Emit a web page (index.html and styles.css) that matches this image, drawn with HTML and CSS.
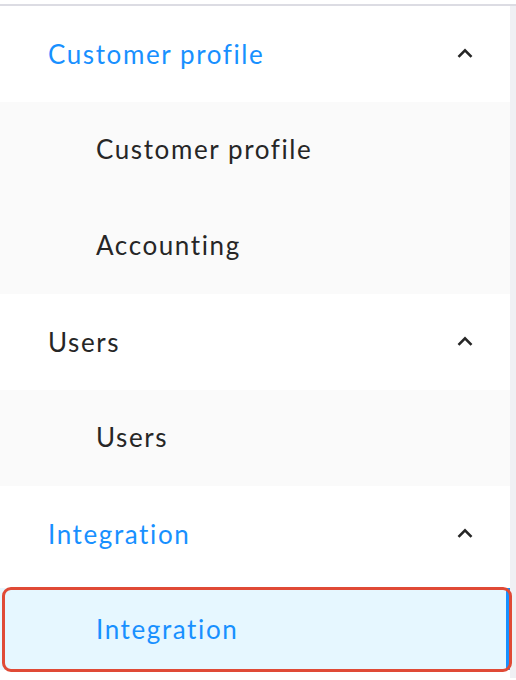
FILE: index.html
```html
<!DOCTYPE html>
<html>
<head>
<meta charset="utf-8">
<link rel="stylesheet" href="styles.css">
</head>
<body>
<div class="topline"></div>
<div class="frame">
  <ul class="menu">
    <li class="sub">
      <div class="sub-title active"><span>Customer profile</span><svg class="arrow" viewBox="0 0 16 10" width="16" height="10"><path d="M1.5 8.8 L8 2.3 L14.5 8.8" fill="none" stroke="#262626" stroke-width="2.6"/></svg></div>
      <ul class="inner">
        <li class="item">Customer profile</li>
        <li class="item">Accounting</li>
      </ul>
    </li>
    <li class="sub">
      <div class="sub-title"><span>Users</span><svg class="arrow" viewBox="0 0 16 10" width="16" height="10"><path d="M1.5 8.8 L8 2.3 L14.5 8.8" fill="none" stroke="#262626" stroke-width="2.6"/></svg></div>
      <ul class="inner">
        <li class="item">Users</li>
      </ul>
    </li>
    <li class="sub">
      <div class="sub-title active"><span>Integration</span><svg class="arrow" viewBox="0 0 16 10" width="16" height="10"><path d="M1.5 8.8 L8 2.3 L14.5 8.8" fill="none" stroke="#262626" stroke-width="2.6"/></svg></div>
      <ul class="inner">
        <li class="item selected">Integration</li>
      </ul>
    </li>
  </ul>
  <div class="scrollbar"></div>
</div>
</body>
</html>
```
FILE: styles.css
```css
html, body {
  margin: 0;
  padding: 0;
  background: #ffffff;
}
body {
  font-family: "Lato", "Noto Sans", sans-serif;
  color: #262626;
  overflow: hidden;
}
.topline {
  margin-top: 4px;
  height: 2px;
  background: #dcdce3;
}
.frame {
  display: flex;
}
.menu {
  list-style: none;
  margin: 0;
  padding: 0;
  flex: 1;
}
.scrollbar {
  width: 6px;
  background: #f0f0f4;
}
.sub-title {
  height: 96px;
  display: flex;
  align-items: center;
  justify-content: space-between;
  padding: 0 37px 0 48px;
  font-size: 26px;
  letter-spacing: 1.6px;
  background: #ffffff;
}
.sub-title.active {
  color: #1890ff;
}
.arrow {
  display: block;
  margin-top: -2px;
}
.inner {
  list-style: none;
  margin: 0;
  padding: 0;
  background: #fafafa;
}
.item {
  height: 82px;
  margin: 0;
  padding: 6px 0 8px 96px;
  display: flex;
  align-items: center;
  font-size: 26px;
  letter-spacing: 1.6px;
}
.item.selected {
  position: relative;
  height: 82px;
  margin: 6px 0 8px;
  padding: 0 0 0 96px;
  background: #e6f7ff;
  color: #1890ff;
  box-shadow: inset -4px 0 0 #1890ff;
}
.item.selected::after {
  content: "";
  position: absolute;
  left: 2px;
  right: -2px;
  top: -1px;
  bottom: -2px;
  border: 3px solid #e04a36;
  border-radius: 9px;
}
```
